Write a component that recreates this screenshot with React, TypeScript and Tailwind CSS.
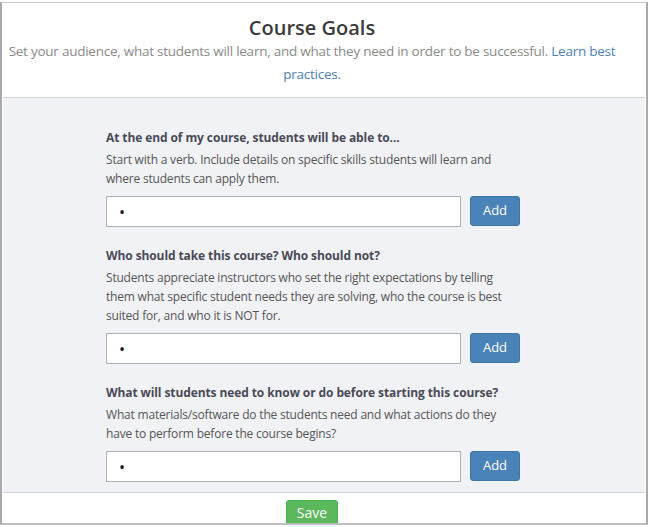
import React from "react";

const sections = [
  {
    label: "At the end of my course, students will be able to...",
    desc: [
      "Start with a verb. Include details on specific skills students will learn and",
      "where students can apply them.",
    ],
  },
  {
    label: "Who should take this course? Who should not?",
    desc: [
      "Students appreciate instructors who set the right expectations by telling",
      "them what specific student needs they are solving, who the course is best",
      "suited for, and who it is NOT for.",
    ],
  },
  {
    label: "What will students need to know or do before starting this course?",
    desc: [
      "What materials/software do the students need and what actions do they",
      "have to perform before the course begins?",
    ],
  },
];

export default function App() {
  return (
    <div className="w-[650px] h-[527px] bg-white pt-[2px] overflow-hidden" style={{ fontFamily: '"Open Sans", sans-serif' }}>
      <div className="w-[648px] h-[523px] border-t border-t-[#c8c8c8] border-l-2 border-r-2 border-b-2 border-l-[#a9a9a9] border-r-[#a9a9a9] border-b-[#bdbdbd] flex flex-col">
        <div className="h-[94px] shrink-0 w-[620px] flex flex-col items-center text-center">
          <h1 className="mt-[14px] text-[20px] leading-[22px] font-semibold text-[#3b3b3b]">Course Goals</h1>
          <p className="w-[620px] mt-[1px] text-[13.5px] leading-[23px] tracking-[-0.25px] text-[#8a8a8a]">
            <span className="whitespace-nowrap">
              Set your audience, what students will learn, and what they need in order to be successful.{" "}
              <span className="text-[#4f7fb3]">Learn best</span>
            </span>
            <br />
            <span className="text-[#4f7fb3]">practices.</span>
          </p>
        </div>
        <div className="mx-px h-[396px] shrink-0 border-t border-b border-[#d6d6d6] bg-[#f1f2f6] pt-[30px]">
          <div className="ml-[103px] w-[420px] flex flex-col gap-[19px]">
            {sections.map((s, i) => (
              <div key={i} className="flex flex-col">
                <div className="text-[12px] leading-[20px] font-bold tracking-[-0.1px] text-[#4a4a56] whitespace-nowrap">{s.label}</div>
                <div className="mt-[2px] text-[12px] leading-[19px] tracking-[-0.2px] text-[#555] whitespace-nowrap">
                  {s.desc.map((d, j) => (
                    <div key={j}>{d}</div>
                  ))}
                </div>
                <div className="mt-[8px] flex items-start gap-[9px]">
                  <div className="w-[355px] h-[31px] border border-[#b0b0b0] bg-white flex items-center pl-[12px]">
                    <span className="text-[16px] text-[#1a1a1a] leading-none">•</span>
                  </div>
                  <button className="w-[50px] h-[30px] rounded-[3px] bg-[#4a83b8] text-white text-[13px] border border-[#3f76a8]">Add</button>
                </div>
              </div>
            ))}
          </div>
        </div>
        <div className="flex-1 w-[620px] flex justify-center pt-[7px] overflow-hidden">
          <button className="w-[52px] h-[26px] shrink-0 rounded-t-[3px] bg-[#5cb85c] text-white text-[14px] leading-[24px] border border-[#4cae4c]">Save</button>
        </div>
      </div>
    </div>
  );
}
